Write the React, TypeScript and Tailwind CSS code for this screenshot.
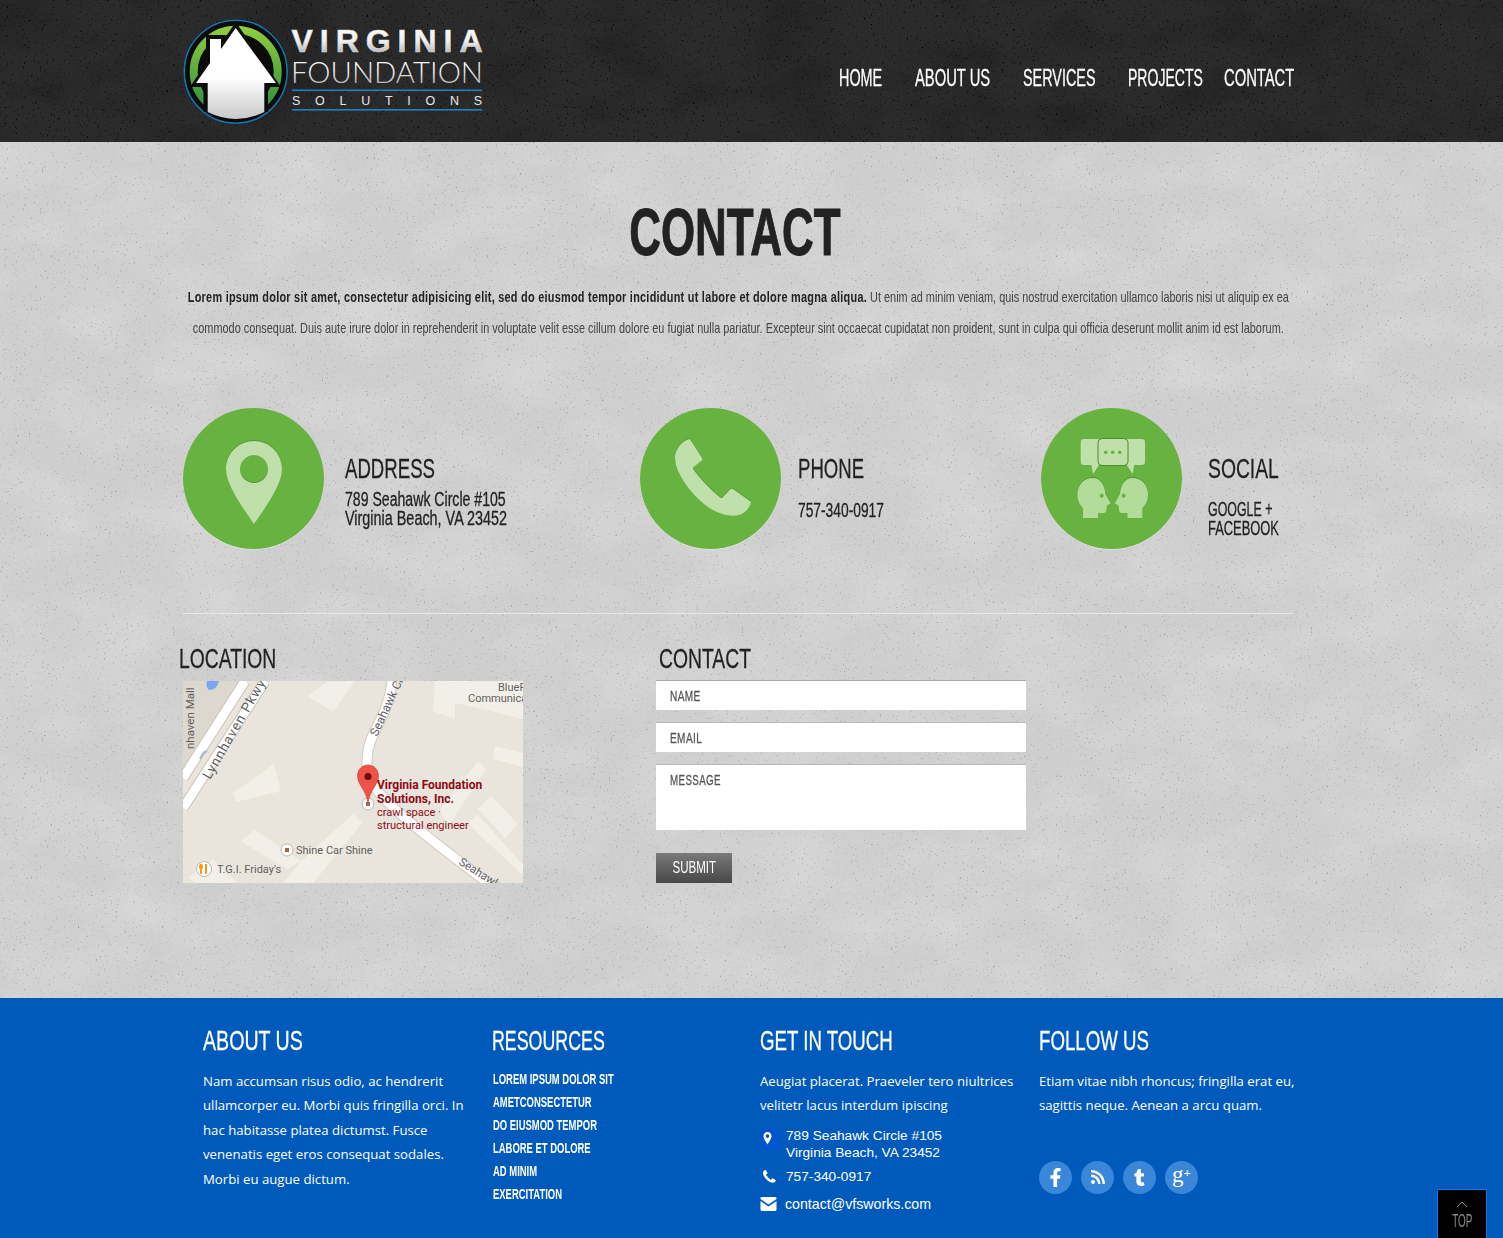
import React from "react";
import { FaFacebookF, FaRss, FaTumblr } from "react-icons/fa";

const navItems = [
  { label: "HOME", box: "w-[76px]", cls: "scale-x-[.60]" },
  { label: "ABOUT US", box: "w-[108px]", cls: "scale-x-[.615]" },
  { label: "SERVICES", box: "w-[105px]", cls: "scale-x-[.60]" },
  { label: "PROJECTS", box: "w-[96px]", cls: "scale-x-[.585]" },
  { label: "CONTACT", box: "w-[70px]", cls: "scale-x-[.615]" },
];

const resources = ["LOREM IPSUM DOLOR SIT", "AMETCONSECTETUR", "DO EIUSMOD TEMPOR", "LABORE ET DOLORE", "AD MINIM", "EXERCITATION"];

// Liberation Sans squeezed sideways, closest thing to the condensed heading face
function C({ cls, children }: { cls: string; children: React.ReactNode }) {
  return <span className={`block origin-left whitespace-nowrap [-webkit-text-stroke:0.3px] ${cls}`}>{children}</span>;
}

function Texture({ id, speck, cloud }: { id: string; speck: string; cloud: string }) {
  return (
    <svg className="absolute inset-0 w-full h-full pointer-events-none" aria-hidden="true">
      <filter id={`${id}-cloud`} x="0" y="0" width="100%" height="100%">
        <feTurbulence type="fractalNoise" baseFrequency="0.012 0.02" numOctaves="6" seed="4" />
        <feColorMatrix type="matrix" values={cloud} />
      </filter>
      <filter id={`${id}-speck`} x="0" y="0" width="100%" height="100%">
        <feTurbulence type="fractalNoise" baseFrequency="0.45" numOctaves="3" seed="9" />
        <feColorMatrix type="matrix" values={speck} />
      </filter>
      <rect width="100%" height="100%" filter={`url(#${id}-cloud)`} />
      <rect width="100%" height="100%" filter={`url(#${id}-speck)`} />
    </svg>
  );
}

function Logo() {
  return (
    <svg width="302" height="112" viewBox="183 16 302 112" className="block">
      <defs>
        <linearGradient id="logoText" x1="0" y1="0" x2="0" y2="1">
          <stop offset="0" stopColor="#ffffff" />
          <stop offset="0.5" stopColor="#f0f0f0" />
          <stop offset="1" stopColor="#9a9a9a" />
        </linearGradient>
        <linearGradient id="houseFill" x1="0" y1="0" x2="0" y2="1">
          <stop offset="0.55" stopColor="#ffffff" />
          <stop offset="1" stopColor="#c9c9c9" />
        </linearGradient>
        <linearGradient id="ringFill" x1="0" y1="0" x2="0" y2="1">
          <stop offset="0" stopColor="#8ccb3e" />
          <stop offset="1" stopColor="#2b8a3e" />
        </linearGradient>
      </defs>
      <circle cx="235.7" cy="71.7" r="52.500" fill="#0b0b0b" />
      <circle cx="235.7" cy="71.7" r="51.500" fill="none" stroke="#1777ab" strokeWidth="1.6" />
      <circle cx="235.7" cy="71.7" r="42" fill="none" stroke="url(#ringFill)" strokeWidth="8" />
      <path
        d="M235.7 22 L281 87 L268 87 L268 112 L203.500 112 L203.500 87 L190 87 L206 63 L206 35 L225 35 L225 38 Z"
        fill="#0b0b0b"
      />
      <path
        d="M235.7 28 L276 83 L264.3 83 L264.3 112 Q236 126 207.7 112 L207.7 83 L196 83 L210 63 L210 39 L221 39 L221 49 Z"
        fill="url(#houseFill)"
      />
      <text x="291.5" y="52" fontFamily="Liberation Sans, sans-serif" fontWeight="700" fontSize="32" fill="url(#logoText)" stroke="#dcdcdc" strokeWidth="0.6" textLength="191" lengthAdjust="spacing">
        VIRGINIA
      </text>
      <text x="291" y="83" fontFamily="Lato, Inter, sans-serif" fontWeight="300" fontSize="30" fill="url(#logoText)" textLength="192" lengthAdjust="spacingAndGlyphs">
        FOUNDATION
      </text>
      <rect x="292" y="89.5" width="190" height="1.6" fill="#1b82c4" />
      <text x="292" y="105" fontFamily="Liberation Sans, sans-serif" fontSize="12.5" fill="#e8e8e8" textLength="190" lengthAdjust="spacing">
        SOLUTIONS
      </text>
      <rect x="292" y="109" width="190" height="1.6" fill="#1b82c4" />
    </svg>
  );
}

function Circle({ children }: { children: React.ReactNode }) {
  return (
    <svg width="141" height="142" viewBox="0 0 141 142" className="block shrink-0">
      <circle cx="70.5" cy="71" r="70.5" fill="#f0f0f0" />
      <circle cx="70.5" cy="70.5" r="70.5" fill="#67b241" />
      {children}
    </svg>
  );
}

function Shaded({ d, fill = "#bfe0ab", rule }: { d: string; fill?: string; rule?: "evenodd" }) {
  return (
    <>
      <path d={d} fill="#4d8c2c" fillRule={rule} transform="translate(0 -0.8)" />
      <path d={d} fill={fill} fillRule={rule} />
    </>
  );
}

const pinPath =
  "M71 33 C55.5 33 43 45.5 43 61 C43 77 60 100 71 116 C82 100 99 77 99 61 C99 45.5 86.5 33 71 33 Z M71 47 a14 14 0 1 1 -0.01 0 Z";
const phonePath =
  "M50 31 L62.3 50.3 Q63 52 61 53 L53.5 59 Q52.5 60 53.3 61.5 Q65 77 80 89.5 Q81.5 90.5 83 89 L90 81.5 Q91.5 80 93 81 L110 93 Q111.5 94 110.5 96 Q106 107.7 93.3 107.7 C75 107.7 58 93 47 78 C38 65 35 57 35 48.7 C35 42 42 32 50 31 Z";
const headPath =
  "M52 70 C42 70 36 78 36.4 87 C36.6 93 39 97 42 100 L42 110 L57 110 L57 105 L63 105 Q65.4 104.5 65.4 102 L66 97.5 L69.7 95.3 L64.5 86 C63.5 76 59 70 52 70 Z";

function PinIcon() {
  return (
    <Circle>
      <Shaded d={pinPath} rule="evenodd" />
    </Circle>
  );
}

function PhoneIcon() {
  return (
    <Circle>
      <Shaded d={phonePath} />
    </Circle>
  );
}

function SocialIcon() {
  return (
    <Circle>
      <path d="M43 31 H58 V57 H58 L52 66 L50.5 57 H43 Q39.7 57 39.7 54 V34 Q39.7 31 43 31 Z" fill="#bfe0ab" />
      <path d="M100.7 31 H85.7 V57 L91.7 66 L93.2 57 H100.7 Q104 57 104 54 V34 Q104 31 100.7 31 Z" fill="#bfe0ab" />
      <rect x="57" y="30.5" width="30" height="27" rx="4" fill="#bfe0ab" stroke="#4d8c2c" strokeWidth="1" />
      <circle cx="64.7" cy="44.3" r="1.8" fill="#67b241" />
      <circle cx="71.7" cy="44.3" r="1.8" fill="#67b241" />
      <circle cx="78.7" cy="44.3" r="1.8" fill="#67b241" />
      <Shaded d={headPath} fill="#b3dc9b" />
      <circle cx="60.7" cy="87.7" r="2" fill="#67b241" />
      <g transform="translate(143.4 0) scale(-1 1)">
        <Shaded d={headPath} fill="#b3dc9b" />
        <circle cx="60.7" cy="87.7" r="2" fill="#67b241" />
      </g>
    </Circle>
  );
}

function MapPicture() {
  return (
    <svg width="340" height="202" viewBox="0 0 340 202" className="block" fontFamily="Roboto, sans-serif">
      <rect width="340" height="202" fill="#e9e5dc" />
      <path d="M0 0 H59 L0 90 Z" fill="#dcd8cf" />
      <path d="M24 0 H36 Q34 9 26 9 Q22 5 24 0 Z" fill="#7ba7ee" />
      <g fill="#f2efe9">
        <path d="M125 15 L145 0 H172 L150 31 Z" />
        <path d="M50 112 L91 83 L98 110 L53 121 Z" />
        <path d="M58 160 L72 149 L118 180 L104 188 Z" />
        <path d="M118 180 L170 133 L179 142 L130 202 H100 Z" />
        <path d="M6 196 L30 178 L54 202 H12 Z" />
        <path d="M252 0 H340 V38 L300 28 L272 22 V38 L250 30 Z" />
        <path d="M312 65 L340 72 V86 L310 78 Z" />
        <path d="M256 130 L295 80 L303 88 L266 144 Z" />
        <path d="M295 128 L308 115 L335 143 L322 157 Z" />
        <path d="M284 142 L295 134 L340 184 V194 Z" />
      </g>
      <path d="M0 97 L62 0 M0 127 L82 0" stroke="#c8c4ba" strokeWidth="11" fill="none" />
      <path d="M0 97 L62 0 M0 127 L82 0" stroke="#ffffff" strokeWidth="9" fill="none" />
      <path d="M209 0 C205 40 184 50 184 80 C184 105 195 120 305 202" stroke="#cfcbc2" strokeWidth="11" fill="none" />
      <path d="M209 0 C205 40 184 50 184 80 C184 105 195 120 305 202" stroke="#ffffff" strokeWidth="9" fill="none" />
      <path d="M20 72 L17 78 M20 72 L24 70" stroke="#a6b9d6" strokeWidth="2" fill="none" />
      <g fill="#5f5f5f" fontSize="11.5">
        <text transform="translate(11 68) rotate(-90)">nhaven Mall</text>
        <text transform="translate(27 99) rotate(-60)" fontSize="13.500" textLength="112">Lynnhaven Pkwy</text>
        <text transform="translate(194 56) rotate(-65)" fontSize="12">Seahawk Cir</text>
        <text transform="translate(275 183) rotate(32)" fontSize="11.500">Seahawk</text>
        <text x="315" y="10" fontSize="11">BlueF</text>
        <text x="285" y="21" fontSize="11">Communica</text>
        <text x="113" y="173" fontSize="11">Shine Car Shine</text>
        <text x="34" y="192" fontSize="11">T.G.I. Friday's</text>
      </g>
      <circle cx="104" cy="169" r="6" fill="#fff" stroke="#bdb9b0" />
      <rect x="102" y="167" width="4" height="4" fill="#9a6b4a" />
      <circle cx="21" cy="188" r="7.5" fill="#fff" stroke="#bdb9b0" />
      <path d="M18 183 V193 M18 183 Q16 186 18 188 Q20 186 18 183 M23 183 V193" stroke="#f59a1b" strokeWidth="2" fill="none" />
      <circle cx="185" cy="123" r="6" fill="#fff" stroke="#bdb9b0" />
      <rect x="183" y="121" width="4" height="4" fill="#9a6b4a" />
      <path d="M185 84 C178.5 84 174.500 89 174.500 95 C174.500 104 183 108 185 122 C187 108 195.500 104 195.500 95 C195.500 89 191.500 84 185 84 Z" fill="#ee5248" stroke="#c9372e" strokeWidth="0.6" />
      <circle cx="185" cy="95.500" r="3.500" fill="#6a0f10" />
      <g fill="#8f0a15">
        <text x="194" y="108" fontSize="12" fontWeight="700">Virginia Foundation</text>
        <text x="194" y="122" fontSize="12" fontWeight="700">Solutions, Inc.</text>
        <text x="194" y="135" fontSize="11">crawl space ·</text>
        <text x="194" y="148" fontSize="11">structural engineer</text>
      </g>
    </svg>
  );
}

const fieldCls = "w-[370px] bg-white pl-[14px] text-[15px] text-[#555] tracking-[0.6px]";
const bodyCls = "mt-[10px] w-[280px] font-[Open_Sans,sans-serif] text-[13.2px] leading-[24.4px] whitespace-nowrap";

export default function App() {
  return (
    <div className="relative w-[1503px] h-[1238px] overflow-hidden font-[Liberation_Sans,sans-serif]">
      <header className="relative h-[142px] bg-[#2b2b2b]">
        <Texture
          id="dark"
          cloud="0 0 0 0 0  0 0 0 0 0  0 0 0 0 0  0.4 0 0 0 -0.16"
          speck="0 0 0 0 0  0 0 0 0 0  0 0 0 0 0  4 0 0 0 -2.6"
        />
        <div className="relative ml-[183px] w-[1111px] h-full flex items-start justify-between">
          <div className="pt-[16px]">
            <Logo />
          </div>
          <nav className="flex items-center h-[22px] mt-[67px] text-[24px] text-white">
            {navItems.map((n) => (
              <a key={n.label} className={`block ${n.box}`}>
                <C cls={n.cls}>{n.label}</C>
              </a>
            ))}
          </nav>
        </div>
      </header>

      <main className="relative h-[856px] bg-[#cfcfcf]">
        <Texture
          id="light"
          cloud="0 0 0 0 1  0 0 0 0 1  0 0 0 0 1  0.35 0 0 0 -0.14"
          speck="0 0 0 0 0.3  0 0 0 0 0.3  0 0 0 0 0.3  4 0 0 0 -2.7"
        />
        <div className="relative ml-[183px] w-[1110px]">
          <h1 className="pt-[52px] pr-[6px] h-[139px] flex justify-center text-[66px] leading-[76px] font-bold text-[#222]">
            <span className="block scale-x-[.665] [-webkit-text-stroke:1px]">CONTACT</span>
          </h1>
          <div className="text-[15px] leading-[31px] text-[#444]">
            <div className="flex justify-center">
              <span className="block whitespace-nowrap scale-x-[.727]">
                <b className="font-bold text-[#222] tracking-[0.35px]">
                  Lorem ipsum dolor sit amet, consectetur adipisicing elit, sed do eiusmod tempor incididunt ut labore et dolore magna aliqua.
                </b>{" "}
                Ut enim ad minim veniam, quis nostrud exercitation ullamco laboris nisi ut aliquip ex ea
              </span>
            </div>
            <div className="flex justify-center">
              <span className="block whitespace-nowrap scale-x-[.727]">
                commodo consequat. Duis aute irure dolor in reprehenderit in voluptate velit esse cillum dolore eu fugiat nulla pariatur. Excepteur sint occaecat cupidatat non proident, sunt in culpa qui officia deserunt mollit anim id est laborum.
              </span>
            </div>
          </div>

          <div className="flex mt-[65px] h-[206px] border-b border-[#e8e8e8] text-[#222]">
            <div className="flex w-[457px] shrink-0">
              <PinIcon />
              <div className="ml-[21px] pt-[43px]">
                <C cls="text-[28px] leading-[36px] scale-x-[.665]">ADDRESS</C>
                <div className="mt-[3px] text-[20px] leading-[19px]">
                  <C cls="scale-x-[.705]">789 Seahawk Circle #105</C>
                  <C cls="scale-x-[.72]">Virginia Beach, VA 23452</C>
                </div>
              </div>
            </div>
            <div className="flex w-[401px] shrink-0">
              <PhoneIcon />
              <div className="ml-[17px] pt-[43px]">
                <C cls="text-[28px] leading-[36px] scale-x-[.663]">PHONE</C>
                <div className="mt-[13px] text-[20px] leading-[20px]">
                  <C cls="scale-x-[.69]">757-340-0917</C>
                </div>
              </div>
            </div>
            <div className="flex shrink-0">
              <SocialIcon />
              <div className="ml-[26px] pt-[43px]">
                <C cls="text-[28px] leading-[36px] scale-x-[.69]">SOCIAL</C>
                <div className="mt-[13px] text-[20px] leading-[19px]">
                  <C cls="scale-x-[.62]">GOOGLE +</C>
                  <C cls="scale-x-[.645]">FACEBOOK</C>
                </div>
              </div>
            </div>
          </div>

          <div className="flex mt-[27px]">
            <div className="w-[473px] shrink-0">
              <C cls="-ml-[4px] text-[28px] leading-[36px] text-[#222] scale-x-[.69]">LOCATION</C>
              <div className="mt-[4px]">
                <MapPicture />
              </div>
            </div>
            <div>
              <C cls="ml-[3px] text-[28px] leading-[36px] text-[#222] scale-x-[.69]">CONTACT</C>
              <form className="mt-[4px]">
                <div className={`${fieldCls} h-[29px] leading-[29px] shadow-[0_-1px_0_#a8a8a8]`}>
                  <C cls="scale-x-[.67]">NAME</C>
                </div>
                <div className={`${fieldCls} h-[29px] leading-[29px] mt-[13px] shadow-[0_-1px_0_#b8b8b8]`}>
                  <C cls="scale-x-[.67]">EMAIL</C>
                </div>
                <div className={`${fieldCls} h-[65px] leading-[29px] mt-[13px] shadow-[0_-1px_0_#b8b8b8]`}>
                  <C cls="scale-x-[.65]">MESSAGE</C>
                </div>
                <button type="button" className="flex justify-center items-center mt-[23px] w-[76px] h-[30px] bg-gradient-to-b from-[#7a7a7a] to-[#484848] text-white text-[16px]">
                  <span className="block scale-x-[.72] whitespace-nowrap">SUBMIT</span>
                </button>
              </form>
            </div>
          </div>
        </div>
      </main>

      <footer className="h-[240px] bg-[#005abb] text-white flex pl-[203px]">
        <div className="w-[289px] shrink-0 pt-[25px]">
          <C cls="text-[28px] leading-[36px] scale-x-[.70]">ABOUT US</C>
          <p className={bodyCls}>
            Nam accumsan risus odio, ac hendrerit
            <br />
            ullamcorper eu. Morbi quis fringilla orci. In
            <br />
            hac habitasse platea dictumst. Fusce
            <br />
            venenatis eget eros consequat sodales.
            <br />
            Morbi eu augue dictum.
          </p>
        </div>
        <div className="w-[268px] shrink-0 pt-[25px]">
          <C cls="text-[28px] leading-[36px] scale-x-[.636]">RESOURCES</C>
          <ul className="mt-[8px] ml-[1px] text-[15px] leading-[23px] font-bold">
            {resources.map((r) => (
              <li key={r} className="origin-left whitespace-nowrap scale-x-[.63]">
                {r}
              </li>
            ))}
          </ul>
        </div>
        <div className="w-[279px] shrink-0 pt-[25px]">
          <C cls="text-[28px] leading-[36px] scale-x-[.667]">GET IN TOUCH</C>
          <p className={bodyCls}>
            Aeugiat placerat. Praeveler tero niultrices
            <br />
            velitetr lacus interdum ipiscing
          </p>
          <div className="text-[13.7px] leading-[17px]">
            <div className="flex mt-[9px]">
              <svg width="26" height="22" viewBox="0 0 26 22" className="shrink-0 mt-[1px]">
                <rect x="-3" width="24" height="22" fill="#0054cc" />
                <path d="M7.500 4 C5 4 3.500 6 3.500 8 C3.500 11 6.500 14.500 7.500 16.500 C8.500 14.500 11.500 11 11.500 8 C11.500 6 10 4 7.500 4 Z M7.500 6.300 a1.800 1.800 0 1 1 -0.010 0 Z" fill="#fff" fillRule="evenodd" />
              </svg>
              <span>
                789 Seahawk Circle #105
                <br />
                Virginia Beach, VA 23452
              </span>
            </div>
            <div className="flex items-center mt-[7px]">
              <svg width="26" height="16" viewBox="0 0 26 16" className="shrink-0">
                <path d={phonePath} fill="#fff" transform="translate(-3 -3.500) scale(0.17)" />
              </svg>
              <span>757-340-0917</span>
            </div>
            <div className="flex items-center mt-[11px]">
              <svg width="25" height="14" viewBox="0 0 25 14" className="shrink-0">
                <path d="M0.500 1 Q0.500 0 2 0 H15 Q16.500 0 16.500 1 V2 L8.500 7.500 L0.500 2 Z M0.500 4 L8.500 9.500 L16.500 4 V12.500 Q16.500 14 15 14 H2 Q0.500 14 0.500 12.500 Z" fill="#fff" />
              </svg>
              <span className="text-[14.2px]">contact@vfsworks.com</span>
            </div>
          </div>
        </div>
        <div className="pt-[25px]">
          <C cls="text-[28px] leading-[36px] scale-x-[.667]">FOLLOW US</C>
          <p className={bodyCls}>
            Etiam vitae nibh rhoncus; fringilla erat eu,
            <br />
            sagittis neque. Aenean a arcu quam.
          </p>
          <div className="flex gap-[9px] mt-[43px]">
            <span className="w-[33px] h-[33px] rounded-full bg-[#3a86d8] flex items-center justify-center text-[19px]"><FaFacebookF /></span>
            <span className="w-[33px] h-[33px] rounded-full bg-[#3a86d8] flex items-center justify-center text-[16px]"><FaRss /></span>
            <span className="w-[33px] h-[33px] rounded-full bg-[#3a86d8] flex items-center justify-center text-[17px]"><FaTumblr /></span>
            <span className="w-[33px] h-[33px] rounded-full bg-[#3a86d8] flex items-center justify-center font-[Liberation_Serif,serif] text-[23px] leading-[23px] pb-[6px]">
              g<span className="text-[13px] leading-[13px] font-bold -mt-[4px]">+</span>
            </span>
          </div>
        </div>
      </footer>

      <a className="absolute right-[16px] bottom-0 w-[50px] h-[49px] bg-black border border-b-0 border-[#1a73e8] rounded-t-[2px] flex flex-col items-center text-[#8a8a8a]">
        <svg width="12" height="7" viewBox="0 0 12 7" className="mt-[11px]">
          <path d="M1 6 L6 1 L11 6" stroke="#8a8a8a" fill="none" />
        </svg>
        <span className="block scale-x-[.55] text-[18px] leading-[18px] mt-[4px]">TOP</span>
      </a>
    </div>
  );
}
